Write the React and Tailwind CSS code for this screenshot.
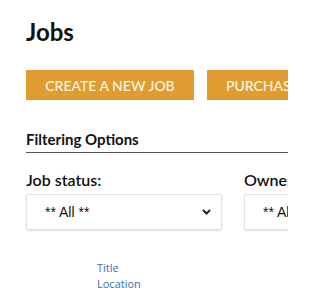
import React from "react";

function Chevron() {
  return (
    <svg width="9" height="6" viewBox="0 0 9 6" className="shrink-0">
      <path d="M1 1 L4.5 4.5 L8 1" fill="none" stroke="#222" strokeWidth="2" />
    </svg>
  );
}

function Select({ label, value }) {
  return (
    <div className="flex flex-col shrink-0 w-[196px]">
      <div className="text-[16px] leading-[18px] font-semibold text-[#111] font-['Lato',sans-serif] whitespace-nowrap">{label}</div>
      <div className="mt-[5px] h-[36px] border border-[#dde3e3] rounded-[2px] shadow-[0_1px_2px_rgba(0,0,0,0.12)] bg-white flex items-center pl-[18px] pr-[10px]">
        <span className="flex-1 text-[14px] text-[#111] font-['Liberation_Sans',sans-serif] whitespace-nowrap">{value}</span>
        <Chevron />
      </div>
    </div>
  );
}

export default function App() {
  return (
    <div className="w-[288px] h-[288px] overflow-hidden bg-white font-['Lato',sans-serif]">
      <div className="pl-[26px] pt-[18px]">
        <h1 className="text-[24px] leading-[28px] font-bold text-[#111]">Jobs</h1>
        <div className="flex gap-[13px] mt-[24px] whitespace-nowrap">
          <button className="shrink-0 w-[168px] h-[30px] bg-[#df9c30] text-[#fdf6e8] text-[14px] font-medium uppercase">Create a new job</button>
          <button className="shrink-0 w-[180px] h-[30px] bg-[#df9c30] text-[#fdf6e8] text-[14px] font-medium text-left pl-[19px] uppercase">Purchase credits</button>
        </div>
        <div className="mt-[30px] border-b border-[#555] pb-[4px]">
          <div className="text-[15px] leading-[18px] font-bold text-[#111]">Filtering Options</div>
        </div>
        <div className="flex gap-[22px] mt-[18px]">
          <Select label="Job status:" value="** All **" />
          <Select label="Owner:" value="** All **" />
        </div>
        <div className="pl-[71px] mt-[30px] flex flex-col text-[11px] leading-[16px] text-[#3b6ea8] font-['Open_Sans',sans-serif]">
          <span>Title</span>
          <span>Location</span>
        </div>
      </div>
    </div>
  );
}
